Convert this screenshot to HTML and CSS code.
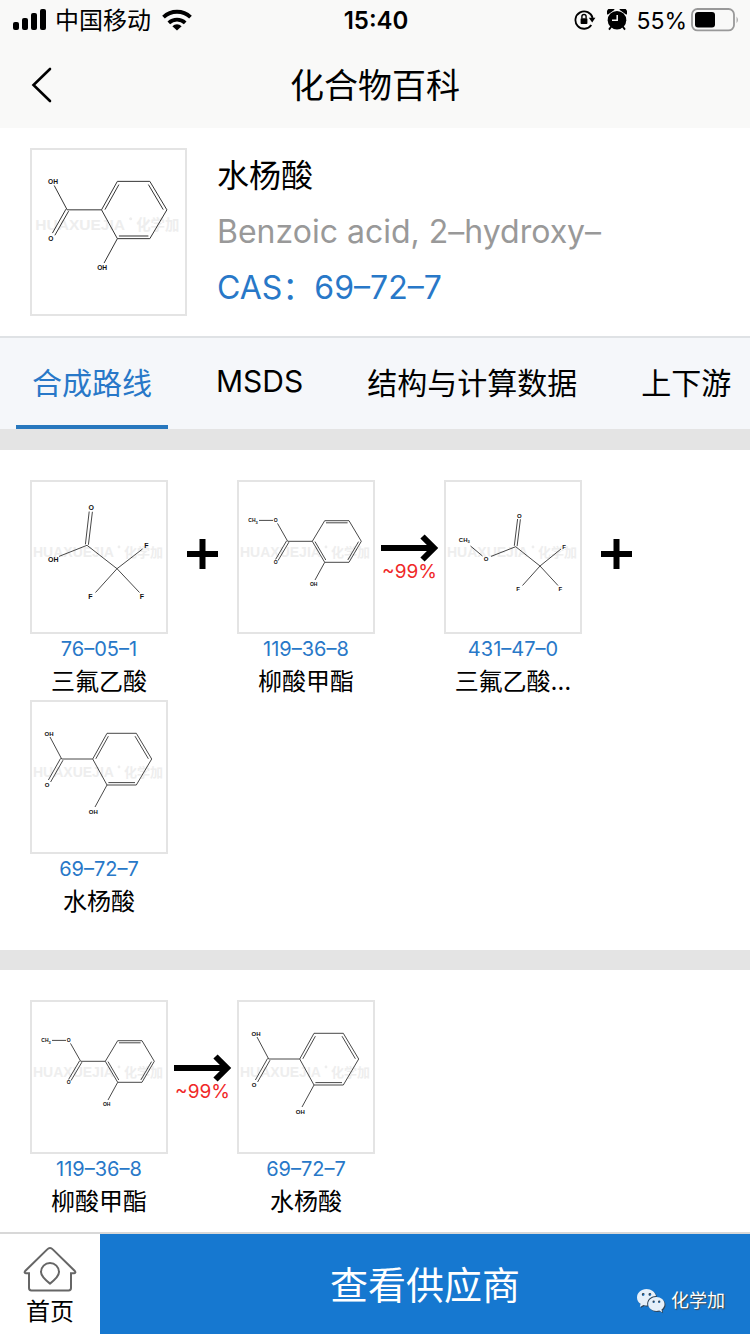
FILE: index.html
```html
<!DOCTYPE html>
<html lang="zh-CN">
<head>
<meta charset="utf-8">
<meta name="viewport" content="width=device-width, initial-scale=1">
<title>化合物百科</title>
<link rel="stylesheet" href="styles.css">
</head>
<body>
<svg class="sprite" aria-hidden="true">
  <symbol id="watermark" viewBox="0 0 138 154">
    <text class="mark mark-latin" x="3" y="77">HUAXUEJIA</text>
    <circle class="mark-dot" cx="89" cy="67" r="1.4"/>
    <text class="mark mark-cjk" x="94" y="77">化学加</text>
  </symbol>
  <symbol id="salicylic" viewBox="0 0 138 154">
    <use href="#watermark" width="138" height="154"/>
    <path class="bond" d="M20 37L31.7 59H62.7L77 33.3H106.3L121.7 59L106.3 85H77L62.7 59M77 85L65 107M30.6 58.4L18.4 80M33 60.2L20.6 82M65.8 58.8L78.4 36.2M105 36.2L118.4 58.8M105 82.6H78.4"/>
    <g class="atoms atoms-m"><text x="19" y="35.5">OH</text><text x="17" y="87.2">O</text><text x="63.3" y="113.5">OH</text></g>
  </symbol>
  <symbol id="methyl-salicylate" viewBox="0 0 138 154">
    <use href="#watermark" width="138" height="154"/>
    <path class="bond" d="M22 40.4H36M40.5 43.4L50.7 61.3H75.3L87.7 40.7H112L124.3 61.3L112 82.3H87.7L75.3 61.3M87.7 82.3L78 100M49.6 60.8L38.6 79.4M51.9 62.2L41 80.6M89 42.8H110.6M121.6 61.6L110.8 80M78 61.6L88.8 80"/>
    <g class="atoms atoms-s"><text x="16" y="42.2">CH<tspan class="sub" dy="1.4">3</tspan></text><text x="38.7" y="42.3">O</text><text x="38.7" y="84.4">O</text><text x="76.7" y="105.8">OH</text></g>
  </symbol>
  <symbol id="tfa" viewBox="0 0 138 154">
    <use href="#watermark" width="138" height="154"/>
    <path class="bond" d="M29 76.4L57 65.3L87 88.7L112.5 69M87 88.7L65.5 112.5M87 88.7L109.5 112.5M55.4 64.4L59.2 31.5M58.4 64.8L62.4 31.8"/>
    <g class="atoms atoms-l"><text x="61.3" y="29.8">O</text><text x="23.3" y="82">OH</text><text x="116.3" y="68">F</text><text x="60.3" y="119.4">F</text><text x="112" y="119.4">F</text></g>
  </symbol>
  <symbol id="methyl-tfa" viewBox="0 0 138 154">
    <use href="#watermark" width="138" height="154"/>
    <path class="bond" d="M26.5 66L38.5 76M47 76.4L71.7 66.7L96 86L117 69M96 86L78.5 105.5M96 86L114 105.5M70.3 65.8L73.6 39M73.1 66.1L76.4 39.3"/>
    <g class="atoms atoms-m"><text x="20.3" y="61.6">CH<tspan class="sub" dy="1.6">3</tspan></text><text x="42" y="81">O</text><text x="75.3" y="37.9">O</text><text x="120" y="68.9">F</text><text x="74" y="110.9">F</text><text x="116.3" y="110.9">F</text></g>
  </symbol>
</svg>

<div class="app">
  <header class="top">
    <div class="status">
      <div class="status-side">
        <svg class="signal" viewBox="0 0 34 22" aria-hidden="true"><rect x="0" y="13" width="6" height="8" rx="2"/><rect x="9" y="9" width="6" height="12" rx="2"/><rect x="18" y="4" width="6" height="17" rx="2"/><rect x="27" y="0" width="6" height="21" rx="2"/></svg>
        <span class="carrier">中国移动</span>
        <svg class="wifi" viewBox="0 0 30 22" aria-hidden="true"><path d="M1.500 8.200a19.500 19.500 0 0 1 27 0M6.800 13.800a12 12 0 0 1 16.400 0" fill="none" stroke="#000" stroke-width="3.800"/><path d="M15 21.600L10.400 17.200a6.600 6.600 0 0 1 9.200 0z"/></svg>
      </div>
      <time class="clock">15:40</time>
      <div class="status-side status-right">
        <svg class="lock" viewBox="0 0 22 22" aria-hidden="true"><path d="M17.3 16A8.700 8.700 0 1 1 18.600 9" fill="none" stroke="#000" stroke-width="1.8"/><path d="M14.800 8.800h6.600l-3.200 4.800z"/><rect x="6.600" y="9.200" width="6.800" height="5.800" rx=".8"/><path d="M7.900 9.600V7.600a2.100 2.100 0 0 1 4.200 0v2" fill="none" stroke="#000" stroke-width="1.400"/></svg>
        <svg class="alarm" viewBox="0 0 20 22" aria-hidden="true"><circle cx="10" cy="11.200" r="9.300"/><path d="M.6 5.800A4 4 0 0 1 7.600.8zM19.400 5.800A4 4 0 0 0 12.400.8z"/><path d="M4.200 17.600L2 20.600M15.800 17.600l2.200 3" stroke="#000" stroke-width="1.800"/><path d="M10.200 6v5.200H5" fill="none" stroke="#f9f9f8" stroke-width="1.500"/></svg>
        <span class="percent">55%</span>
        <svg class="battery" viewBox="0 0 48 24" aria-hidden="true"><rect x="1" y="1" width="42" height="21.400" rx="5.500" fill="none" stroke="#999" stroke-width="1.800"/><rect x="4" y="4" width="20" height="15.400" rx="3"/><path d="M45.600 8.400q2.400 3.400 0 6.800z" fill="#999"/></svg>
      </div>
    </div>
    <nav class="nav">
      <button class="back" type="button" aria-label="返回"><svg viewBox="0 0 22 36" aria-hidden="true"><path d="M19 2L2.500 18L19 34"/></svg></button>
      <h1 class="title">化合物百科</h1>
    </nav>
  </header>

  <section class="summary">
    <div class="thumb thumb-large"><svg viewBox="0 5 138 148" role="img" aria-label="水杨酸"><use href="#salicylic" width="138" height="154"/></svg></div>
    <div class="summary-text">
      <h2 class="compound">水杨酸</h2>
      <p class="english">Benzoic acid, 2–hydroxy–</p>
      <p class="cas-main">CAS：69–72–7</p>
    </div>
  </section>

  <nav class="tabs">
    <button class="tab tab-active" type="button">合成路线</button>
    <button class="tab" type="button">MSDS</button>
    <button class="tab" type="button">结构与计算数据</button>
    <button class="tab" type="button">上下游</button>
  </nav>

  <main class="routes">
    <section class="route">
      <a class="card" href="#c1"><span class="thumb"><svg viewBox="2 2 134 150" aria-hidden="true"><use href="#tfa" width="138" height="154"/></svg></span><span class="cas">76–05–1</span><span class="name">三氟乙酸</span></a>
      <div class="op"><svg class="plus" viewBox="0 0 32 32" role="img" aria-label="加"><path d="M0 16H31M15.500 1V31"/></svg></div>
      <a class="card" href="#c2"><span class="thumb"><svg viewBox="2 2 134 150" aria-hidden="true"><use href="#methyl-salicylate" width="138" height="154"/></svg></span><span class="cas">119–36–8</span><span class="name">柳酸甲酯</span></a>
      <div class="op"><svg class="arrow" viewBox="0 0 58 28" role="img" aria-label="生成"><path d="M0 14H53M41.500 2.500L53 14L41.500 25.500"/></svg><span class="yield">~99%</span></div>
      <a class="card" href="#c3"><span class="thumb"><svg viewBox="2 2 134 150" aria-hidden="true"><use href="#methyl-tfa" width="138" height="154"/></svg></span><span class="cas">431–47–0</span><span class="name">三氟乙酸…</span></a>
      <div class="op"><svg class="plus" viewBox="0 0 32 32" role="img" aria-label="加"><path d="M0 16H31M15.500 1V31"/></svg></div>
      <a class="card" href="#c4"><span class="thumb"><svg viewBox="2 2 134 150" aria-hidden="true"><use href="#salicylic" width="138" height="154"/></svg></span><span class="cas">69–72–7</span><span class="name">水杨酸</span></a>
    </section>
    <section class="route">
      <a class="card" href="#c2"><span class="thumb"><svg viewBox="2 2 134 150" aria-hidden="true"><use href="#methyl-salicylate" width="138" height="154"/></svg></span><span class="cas">119–36–8</span><span class="name">柳酸甲酯</span></a>
      <div class="op"><svg class="arrow" viewBox="0 0 58 28" role="img" aria-label="生成"><path d="M0 14H53M41.500 2.500L53 14L41.500 25.500"/></svg><span class="yield">~99%</span></div>
      <a class="card" href="#c4"><span class="thumb"><svg viewBox="2 2 134 150" aria-hidden="true"><use href="#salicylic" width="138" height="154"/></svg></span><span class="cas">69–72–7</span><span class="name">水杨酸</span></a>
    </section>
  </main>

  <footer class="bottom">
    <a class="home" href="#home">
      <svg viewBox="0 0 54 46" aria-hidden="true"><path d="M27 2Q25.600 2 24 3.600L2.200 25q-1.400 2 .6 2.200H6V42q0 2.400 2.400 2.400H45.600q2.400 0 2.400-2.400V27.200h3.200q2-.2.600-2.200L30 3.600Q28.400 2 27 2z"/><path d="M27 37.600Q18 30.500 18 26a9 9 0 0 1 18 0Q36 30.500 27 37.600z"/></svg>
      <span>首页</span>
    </a>
    <button class="suppliers" type="button">查看供应商</button>
    <div class="wechat">
      <svg viewBox="0 0 28 24" aria-hidden="true"><path fill="#e6f0fa" fill-rule="evenodd" d="M9.500 0C4.200 0 0 3.700 0 8.400c0 2.700 1.400 4.900 3.600 6.400L2.800 18l3.600-1.900q1.800.5 4 .5C9.200 11.400 13.400 7 19 7C18.200 3 14.200 0 9.500 0zM6.200 4.100a1.400 1.400 0 1 1 0 2.800a1.400 1.400 0 0 1 0-2.800zM12.900 4.100a1.400 1.400 0 1 1 0 2.800a1.400 1.400 0 0 1 0-2.800z"/><path fill="#e6f0fa" fill-rule="evenodd" d="M19.400 8c-4.600 0-8.200 3-8.200 7s3.600 7 8.200 7q1.500 0 2.900-.4L25.200 23.200l-.7-2.700C26.300 19.200 27.500 17.300 27.500 15c0-4-3.600-7-8.100-7zM16.700 11.600a1.200 1.200 0 1 1 0 2.400a1.200 1.200 0 0 1 0-2.400zM22.200 11.600a1.200 1.200 0 1 1 0 2.400a1.200 1.200 0 0 1 0-2.400z"/></svg>
      <span>化学加</span>
    </div>
  </footer>
</div>
</body>
</html>
```
FILE: styles.css
```css
* { box-sizing: border-box; margin: 0; padding: 0; }

body {
  background: #fff;
  color: #000;
  font-family: Inter, "Noto Sans CJK SC", sans-serif;
}

button { border: 0; background: none; font: inherit; color: inherit; }
a { color: inherit; text-decoration: none; }
svg { display: block; }

.sprite { display: none; }

.app { display: flex; flex-direction: column; height: 100vh; }

/* Status bar and title */
.top { flex: none; background: #f9f9f8; }

.status {
  display: flex;
  align-items: center;
  height: 40px;
  padding: 0 11px 0 13px;
  font-size: 24px;
  line-height: 40px;
}
.status-side { display: flex; align-items: center; flex: 1; }
.status-right { justify-content: flex-end; }
.signal { width: 34px; height: 22px; }
.carrier { margin: 0 11px 0 8px; padding-top: 2px; }
.wifi { width: 30px; height: 22px; }
.clock { padding-top: 2px; font-weight: 600; }
.lock { width: 22px; height: 22px; margin-right: 11px; }
.alarm { width: 20px; height: 22px; margin-right: 9px; }
.percent { margin-right: 4px; padding-top: 2px; font-size: 23px; }
.battery { width: 48px; height: 24px; }

.nav {
  display: grid;
  grid-template-columns: 88px 1fr 88px;
  align-items: center;
  height: 88px;
}
.back { height: 88px; padding-left: 31px; }
.back svg { width: 22px; height: 36px; fill: none; stroke: #000; stroke-width: 2.6; stroke-linecap: round; }
.title { padding-top: 2px; font-size: 34px; font-weight: 400; line-height: 88px; text-align: center; }

/* Compound summary */
.summary { display: flex; flex: none; gap: 30px; padding: 20px 30px; }
.summary-text { font-size: 32px; line-height: 56px; }
.compound { font-size: 32px; font-weight: 400; }
.english { color: #999; }
.cas-main { color: #2878c8; }

.thumb {
  display: block;
  width: 138px;
  height: 154px;
  border: 2px solid #e4e4e4;
}
.thumb-large { width: 157px; height: 168px; }
.thumb svg { width: 100%; height: 100%; }

.bond { fill: none; stroke: #333; stroke-width: 0.9; }
.atoms { text-anchor: middle; fill: #111; font-family: "Liberation Sans", sans-serif; font-weight: 700; }
.atoms-s { font-size: 5px; }
.atoms-m { font-size: 6px; }
.atoms-l { font-size: 7px; }
.sub { font-size: 4px; }
.mark { fill: #eee; font-weight: 700; }
.mark-latin { font-family: "Liberation Sans", sans-serif; font-size: 14px; }
.mark-cjk { font-family: "Noto Sans CJK SC", sans-serif; font-size: 13px; }
.mark-dot { fill: #eee; }

/* Tabs */
.tabs {
  display: flex;
  flex: none;
  gap: 32px;
  height: 93px;
  padding: 0 16px;
  overflow-x: auto;
  scrollbar-width: none;
  border-top: 2px solid #dfe2e5;
  background: #f5f7fa;
}
.tab {
  flex: none;
  padding: 0 16px 2px;
  border-bottom: 4px solid transparent;
  font-size: 30px;
  white-space: nowrap;
}
.tab-active { border-bottom-color: #2878be; color: #2878c8; }

/* Synthesis routes */
.routes { flex: 1; min-height: 0; overflow-y: auto; scrollbar-width: none; }
.route {
  display: flex;
  flex-wrap: wrap;
  padding: 30px;
  border-top: 20px solid #e4e4e4;
}
.route:first-child { border-top-width: 21px; }
.card { width: 138px; text-align: center; }
.cas { display: block; color: #2878c8; font-size: 20px; line-height: 30px; }
.name { display: block; font-size: 24px; line-height: 36px; white-space: nowrap; }
.op {
  display: flex;
  flex-direction: column;
  align-items: center;
  width: 69px;
  padding-top: 54px;
}
.plus { width: 32px; height: 32px; margin-top: 4px; fill: none; stroke: #000; stroke-width: 6; }
.arrow { width: 58px; height: 28px; fill: none; stroke: #000; stroke-width: 6; }
.yield { color: #f02828; font-size: 19px; line-height: 20px; }

/* Bottom bar */
.bottom {
  position: relative;
  display: flex;
  flex: none;
  height: 102px;
  border-top: 2px solid #d8d8d8;
  background: #fff;
}
.home {
  display: flex;
  flex-direction: column;
  align-items: center;
  width: 100px;
  padding-top: 12px;
  font-size: 24px;
  line-height: 40px;
}
.home svg { width: 54px; height: 46px; fill: none; stroke: #666; stroke-width: 2; }
.suppliers { flex: 1; padding-bottom: 4px; background: #1678d0; color: #fff; font-size: 38px; }
.wechat {
  position: absolute;
  right: 25px;
  bottom: 20px;
  display: flex;
  align-items: center;
  gap: 6px;
  color: #fff;
  font-size: 18px;
  line-height: 26px;
  text-shadow: 1px 1px 1px #444;
}
.wechat svg { width: 28px; height: 24px; filter: drop-shadow(1px 1px 0 #345); }
```
